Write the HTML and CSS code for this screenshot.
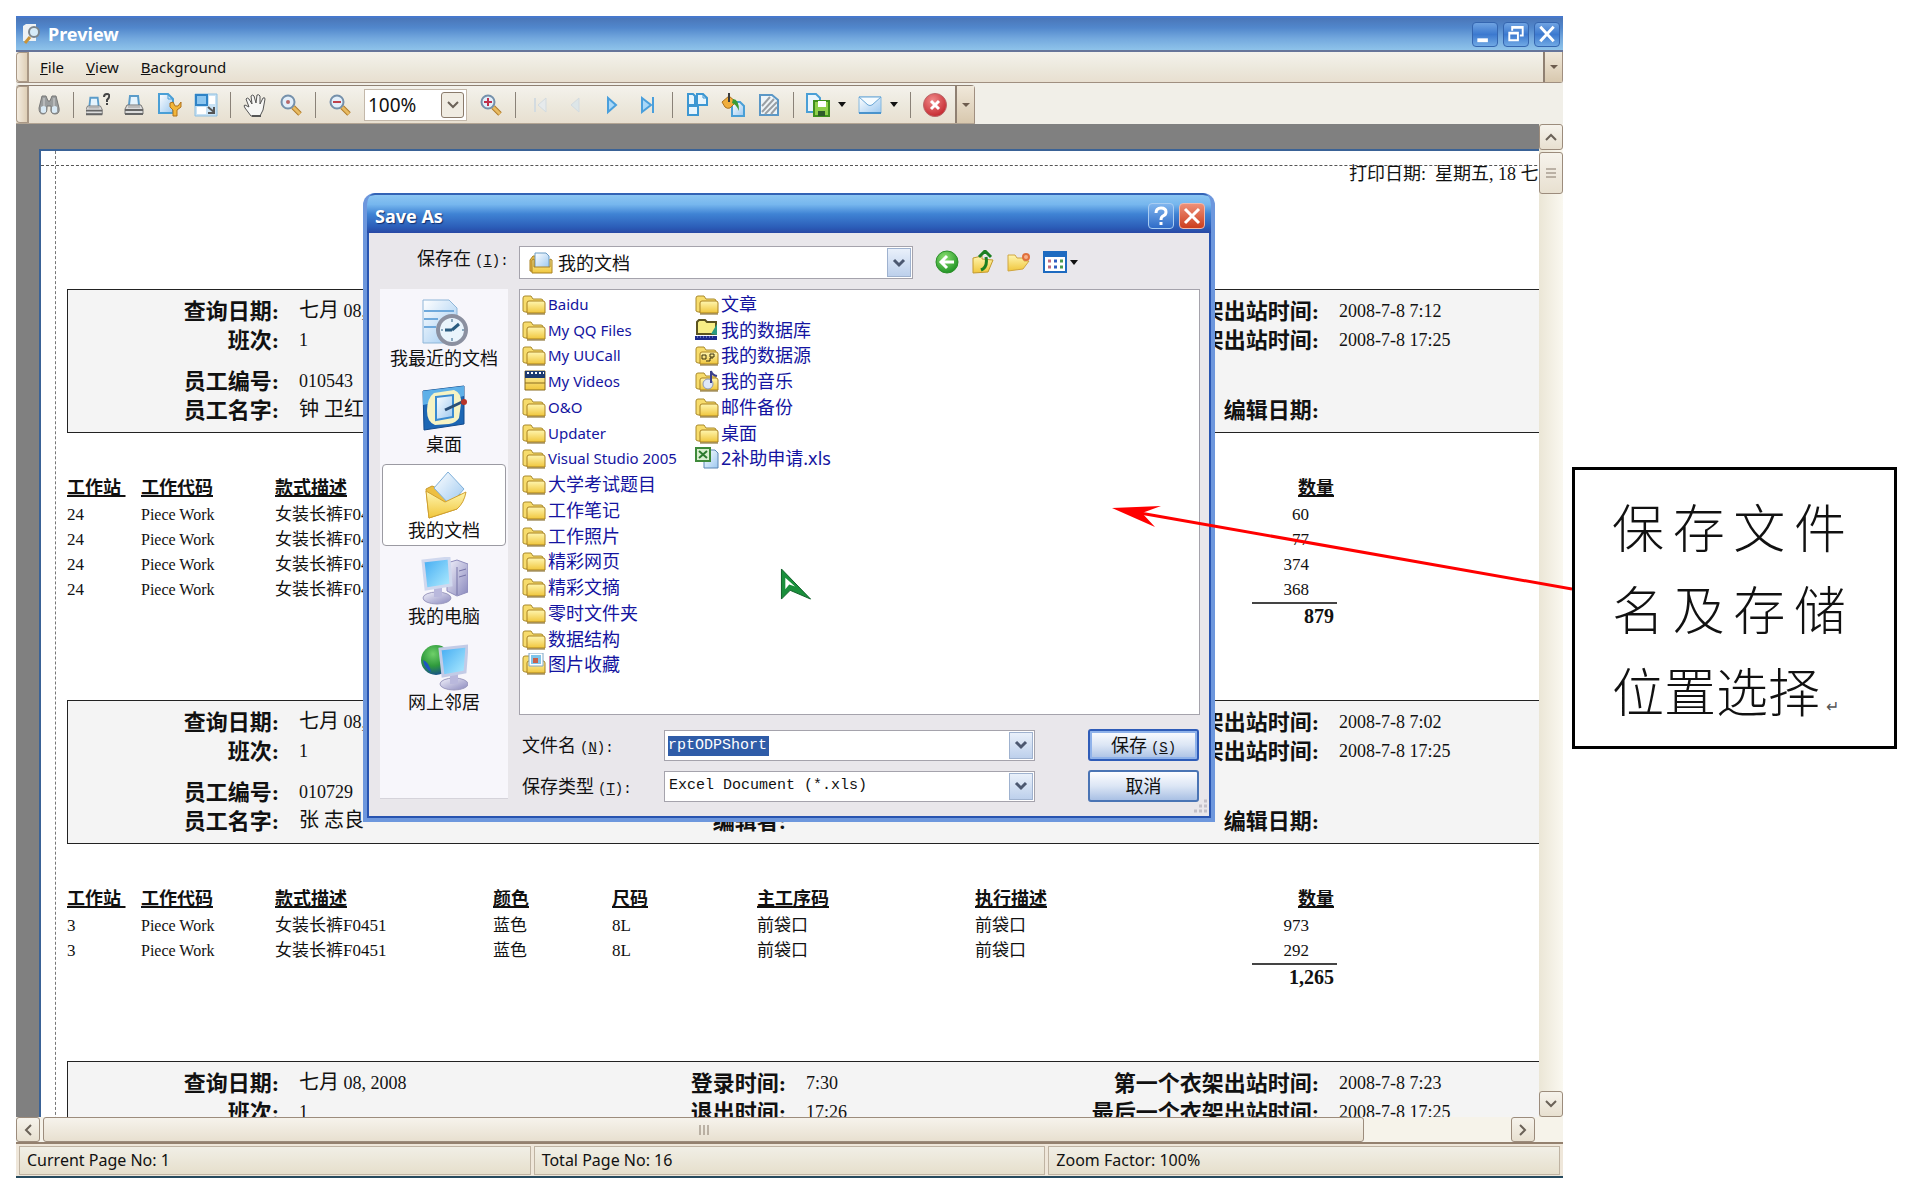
FILE: index.html
```html
<!DOCTYPE html>
<html lang="zh-CN">
<head>
<meta charset="utf-8">
<title>Preview</title>
<link rel="stylesheet" href="styles.css">
</head>
<body>
<svg class="defs" aria-hidden="true">
  <defs>
    <linearGradient id="gFold" x1="0" y1="0" x2="0" y2="1"><stop offset="0" stop-color="#fff6b0"/><stop offset="1" stop-color="#f0c63c"/></linearGradient>
    <linearGradient id="gBlue" x1="0" y1="0" x2="1" y2="1"><stop offset="0" stop-color="#ffffff"/><stop offset="1" stop-color="#9cc8f0"/></linearGradient>
    <linearGradient id="gScreen" x1="0" y1="0" x2="1" y2="1"><stop offset="0" stop-color="#3fa9f2"/><stop offset="1" stop-color="#b5efff"/></linearGradient>
    <linearGradient id="gGray" x1="0" y1="0" x2="1" y2="1"><stop offset="0" stop-color="#f2f2fb"/><stop offset="1" stop-color="#8a88bd"/></linearGradient>
    <radialGradient id="gRed" cx=".4" cy=".3" r=".8"><stop offset="0" stop-color="#f08a8a"/><stop offset="1" stop-color="#c01c24"/></radialGradient>
    <radialGradient id="gGreen" cx=".4" cy=".3" r=".8"><stop offset="0" stop-color="#8be070"/><stop offset="1" stop-color="#138a1c"/></radialGradient>
    <radialGradient id="gGlobe" cx=".4" cy=".3" r=".8"><stop offset="0" stop-color="#6fd06a"/><stop offset=".5" stop-color="#2f9a3c"/><stop offset="1" stop-color="#123f9c"/></radialGradient>
    <symbol id="folder" viewBox="0 0 24 22">
      <path d="M1 18V5q0-2 2-2h6l2 3h8q2 0 2 2v11H3z" fill="#f7dc6c" stroke="#a98a2c"/>
      <path d="M5 20V10q0-2 2-2h14q2 0 2 2v10z" fill="url(#gFold)" stroke="#a98222"/>
      <path d="M5 21h18" stroke="#7c6118"/>
    </symbol>
    <symbol id="chev" viewBox="0 0 14 10"><path d="M2 2l5 5 5-5" fill="none" stroke="currentColor" stroke-width="3"/></symbol>
    <symbol id="lens" viewBox="0 0 24 24">
      <path d="M14 14l7 7" stroke="#b07a28" stroke-width="5"/><path d="M14 14l7 7" stroke="#e8bb62" stroke-width="3"/>
      <circle cx="9" cy="9" r="6.500" fill="#e3effa" stroke="#7590ab" stroke-width="2"/>
    </symbol>
    <symbol id="printer" viewBox="0 0 24 24">
      <path d="M7 12L8 3h8l1 9" fill="#e6f4fd" stroke="#5b9cc9" stroke-width="2"/>
      <path d="M5 12h14l2 4v5H3v-5z" fill="#dcdcdc" stroke="#777"/><path d="M3 17h18M3 21h18" stroke="#666" stroke-width="2"/><path d="M6 14h12" stroke="#999"/>
    </symbol>
  </defs>
</svg>

<main class="app">
  <header class="titlebar">
    <svg class="app-icon" viewBox="0 0 20 22"><path d="M1 3l3-2h10v17H1z" fill="#eef2f4"/><path d="M8 14l-5 6" stroke="#c99438" stroke-width="3"/><circle cx="12" cy="9" r="5" fill="#d6ebf8" stroke="#7b858d" stroke-width="2"/></svg>
    <h1>Preview</h1>
    <div class="win-buttons">
      <button aria-label="Minimize"><svg viewBox="0 0 24 24"><path d="M4 18h11" stroke="#fff" stroke-width="4"/></svg></button>
      <button aria-label="Restore"><svg viewBox="0 0 24 24"><path d="M8 8V4h11v9h-3M8 5h11" fill="none" stroke="#fff" stroke-width="2"/><path d="M5 10h9v8H5zM5 11h9" fill="none" stroke="#fff" stroke-width="2"/></svg></button>
      <button aria-label="Close"><svg viewBox="0 0 24 24"><path d="M5 4l14 15M19 4L5 19" stroke="#fff" stroke-width="3"/></svg></button>
    </div>
  </header>

  <nav class="menubar">
    <span class="grip"></span>
    <button><u>F</u>ile</button><button><u>V</u>iew</button><button><u>B</u>ackground</button>
    <button class="overflow" aria-label="More menus"><i class="tri"></i></button>
  </nav>

  <div class="toolrow">
  <div class="toolbar">
    <span class="grip"></span>
    <div class="tools">
      <button aria-label="Find"><svg viewBox="0 0 24 24"><path d="M5 3h4l2 5h2l2-5h4l3 12q1 6-4 6t-4-6v-2h-4v2q0 6-4 6t-4-6z" fill="#9a9d9e" stroke="#777"/><path d="M4 14q3-2 5 0v5q-3 2-5 0zM15 14q3-2 5 0v5q-3 2-5 0z" fill="#d9eaf6"/><path d="M7 5v8M17 5v8" stroke="#d5d5d5"/></svg></button>
      <i class="sep"></i>
      <button aria-label="Print options"><svg viewBox="0 0 24 24"><use href="#printer" x="-3" y="2" width="22" height="22"/><path d="M18 4q0-3 3-3t2 3q0 1-2 3v2M21 10v2" fill="none" stroke="#444" stroke-width="2"/></svg></button>
      <button aria-label="Print"><svg viewBox="0 0 24 24"><use href="#printer" width="24" height="24"/></svg></button>
      <button aria-label="Page setup"><svg viewBox="0 0 24 24"><path d="M1 1h9l5 5v14H1z" fill="url(#gBlue)" stroke="#4a9fd6" stroke-width="2"/><path d="M10 1v5h5" fill="none" stroke="#4a9fd6"/><path d="M12 10v4l3 3v6h4v-6l4-3v-5l-3 4h-3l-2-4z" fill="#f3b63a" stroke="#b0721c"/></svg></button>
      <button aria-label="Scale"><svg viewBox="0 0 24 24"><path d="M1 1h22v22H1z" fill="#c9e2f4" stroke="#8fbfe0"/><path d="M2 2h11v10H2z" fill="#8cc6f0" stroke="#2f83c6" stroke-width="2"/><path d="M15 3h6v8h-6zM3 14h9v7H3z" fill="#fff"/><path d="M14 14l6 5M20 14v6h-6" fill="none" stroke="#555" stroke-width="2"/></svg></button>
      <i class="sep"></i>
      <button aria-label="Hand tool"><svg viewBox="0 0 24 24"><path d="M8 23l-6-8q-2-3 0-3l4 2-3-8q1-2 3 0l3 5-1-8q2-2 3 0l2 7 1-8q2-1 3 1v8l3-6q2-1 2 1l-2 11-3 6z" fill="#f7f7f5" stroke="#555"/><path d="M9 23h9" stroke="#555" stroke-width="2"/></svg></button>
      <button aria-label="Magnifier"><svg viewBox="0 0 24 24"><use href="#lens" width="24" height="24"/><circle cx="9" cy="9" r="2" fill="#b8686a"/></svg></button>
      <i class="sep"></i>
      <button aria-label="Zoom out"><svg viewBox="0 0 24 24"><use href="#lens" width="24" height="24"/><path d="M5 9h8" stroke="#c0404a" stroke-width="2"/></svg></button>
      <div class="zoom"><select aria-label="Zoom"><option>100%</option></select><span class="drop"><svg viewBox="0 0 14 10"><path d="M2 2l5 5 5-5" fill="none" stroke="#6b6258" stroke-width="2"/></svg></span></div>
      <button aria-label="Zoom in"><svg viewBox="0 0 24 24"><use href="#lens" width="24" height="24"/><path d="M5 9h8M9 5v8" stroke="#c0304a" stroke-width="2"/></svg></button>
      <i class="sep"></i>
      <button aria-label="First page" disabled><svg viewBox="0 0 24 24"><path d="M7 5v14" stroke="#d3dbe0" stroke-width="2"/><path d="M18 5v14l-8-7z" fill="#e6eaec" stroke="#d3dbe0"/></svg></button>
      <button aria-label="Previous page" disabled><svg viewBox="0 0 24 24"><path d="M15 5v14l-8-7z" fill="#dde6e8" stroke="#d3dbe0"/></svg></button>
      <button aria-label="Next page"><svg viewBox="0 0 24 24"><path d="M8 5v14l8-7z" fill="#a9d8f8" stroke="#4a9fdc" stroke-width="2"/></svg></button>
      <button aria-label="Last page"><svg viewBox="0 0 24 24"><path d="M6 5v14l9-7z" fill="#a9d8f8" stroke="#4a9fdc" stroke-width="2"/><path d="M17 4v16" stroke="#4a9fdc" stroke-width="2"/></svg></button>
      <i class="sep"></i>
      <button aria-label="Multiple pages"><svg viewBox="0 0 24 24"><path d="M3 1h5l2 2v9H3zM12 1h6l4 4v7H12zM3 13h10v9H3z" fill="#e8f5fd" stroke="#3d97d2" stroke-width="2"/><path d="M18 1v4h4" fill="none" stroke="#3d97d2"/></svg></button>
      <button aria-label="Page color"><svg viewBox="0 0 24 24"><path d="M11 9h8l4 4v10H11z" fill="url(#gBlue)" stroke="#4a9fd6" stroke-width="2"/><path d="M1 9l7-6 7 6-6 6q-3 1-5-1z" fill="#f0ae3c" stroke="#a9701c"/><path d="M8 0v9" stroke="#3c3c3c" stroke-width="2"/><path d="M12 6q6 0 6 12-3-7-7-8z" fill="#3a9a34"/></svg></button>
      <button aria-label="Watermark"><svg viewBox="0 0 24 24"><path d="M3 2h12l6 5v15H3z" fill="#eef4f8" stroke="#5b97c6" stroke-width="2"/><path d="M5 13l8-9M5 19L17 6M8 21L20 9M14 21l6-7" stroke="#9a9fa4" stroke-width="2"/></svg></button>
      <i class="sep"></i>
      <button class="split" aria-label="Export"><svg viewBox="0 0 24 24"><path d="M1 1h9l4 4v14H1z" fill="#eaf5fc" stroke="#4a9fd6" stroke-width="2"/><path d="M8 8h15v15H8z" fill="#8fd04a" stroke="#3f8f1c" stroke-width="2"/><path d="M12 8h8v6h-8z" fill="#fff"/><path d="M12 18h7v5h-7z" fill="#2f5c2a"/></svg><i class="tri big"></i></button>
      <button class="split" aria-label="Send mail"><svg viewBox="0 0 24 24"><path d="M1 4h22v16H1z" fill="url(#gBlue)" stroke="#86b9de"/><path d="M1 4h22l-9 8q-2 1-4 0z" fill="#f5fbff" stroke="#6aa7d6"/><path d="M1 20h22" stroke="#4a93cc" stroke-width="2"/></svg><i class="tri big"></i></button>
      <i class="sep"></i>
      <button aria-label="Exit"><svg viewBox="0 0 24 24"><circle cx="12" cy="12" r="11.500" fill="url(#gRed)" stroke="#b9686a"/><path d="M8 8l8 8M16 8l-8 8" stroke="#fff" stroke-width="3"/></svg></button>
    </div>
    <button class="overflow" aria-label="Toolbar options"><i class="tri"></i></button>
  </div>
  </div>

  <section class="viewer">
    <div class="canvas">
      <article class="sheet">
        <p class="printed">打印日期: &nbsp;星期五, 18 七</p>

        <section class="info">
          <b>查询日期:</b><span><em>七月</em> 08, 2008</span><b></b><span></span><b>第一个衣架出站时间:</b><span>2008-7-8 7:12</span>
          <b>班次:</b><span>1</span><b></b><span></span><b>最后一个衣架出站时间:</b><span>2008-7-8 17:25</span>
          <b>员工编号:</b><span>010543</span><b></b><span></span><b></b><span></span>
          <b>员工名字:</b><span><em>钟 卫红</em></span><b></b><span></span><b>编辑日期:</b><span></span>
        </section>
        <table class="work">
          <colgroup><col class="c1"><col class="c2"><col class="c3"><col class="c4"><col class="c5"><col class="c6"><col class="c7"><col class="c8"></colgroup>
          <thead><tr><th>工作站&nbsp;</th><th>工作代码</th><th>款式描述</th><th></th><th></th><th></th><th></th><th>数量</th></tr></thead>
          <tbody>
            <tr><td>24</td><td>Piece Work</td><td>女装长裤F0451</td><td></td><td></td><td></td><td></td><td>60</td></tr>
            <tr><td>24</td><td>Piece Work</td><td>女装长裤F0451</td><td></td><td></td><td></td><td></td><td>77</td></tr>
            <tr><td>24</td><td>Piece Work</td><td>女装长裤F0451</td><td></td><td></td><td></td><td></td><td>374</td></tr>
            <tr><td>24</td><td>Piece Work</td><td>女装长裤F0451</td><td></td><td></td><td></td><td></td><td>368</td></tr>
          </tbody>
          <tfoot><tr><td colspan="8"><span>879</span></td></tr></tfoot>
        </table>

        <section class="info">
          <b>查询日期:</b><span><em>七月</em> 08, 2008</span><b></b><span></span><b>第一个衣架出站时间:</b><span>2008-7-8 7:02</span>
          <b>班次:</b><span>1</span><b></b><span></span><b>最后一个衣架出站时间:</b><span>2008-7-8 17:25</span>
          <b>员工编号:</b><span>010729</span><b></b><span></span><b></b><span></span>
          <b>员工名字:</b><span><em>张 志良</em></span><b>编辑者:</b><span></span><b>编辑日期:</b><span></span>
        </section>
        <table class="work">
          <colgroup><col class="c1"><col class="c2"><col class="c3"><col class="c4"><col class="c5"><col class="c6"><col class="c7"><col class="c8"></colgroup>
          <thead><tr><th>工作站&nbsp;</th><th>工作代码</th><th>款式描述</th><th>颜色</th><th>尺码</th><th>主工序码</th><th>执行描述</th><th>数量</th></tr></thead>
          <tbody>
            <tr><td>3</td><td>Piece Work</td><td>女装长裤F0451</td><td>蓝色</td><td>8L</td><td>前袋口</td><td>前袋口</td><td>973</td></tr>
            <tr><td>3</td><td>Piece Work</td><td>女装长裤F0451</td><td>蓝色</td><td>8L</td><td>前袋口</td><td>前袋口</td><td>292</td></tr>
          </tbody>
          <tfoot><tr><td colspan="8"><span>1,265</span></td></tr></tfoot>
        </table>

        <section class="info">
          <b>查询日期:</b><span><em>七月</em> 08, 2008</span><b>登录时间:</b><span>7:30</span><b>第一个衣架出站时间:</b><span>2008-7-8 7:23</span>
          <b>班次:</b><span>1</span><b>退出时间:</b><span>17:26</span><b>最后一个衣架出站时间:</b><span>2008-7-8 17:25</span>
        </section>
      </article>
    </div>
    <div class="vscroll">
      <button aria-label="Scroll up"><svg viewBox="0 0 14 10"><path d="M2 8l5-5 5 5" fill="none" stroke="#6b6258" stroke-width="2"/></svg></button>
      <span class="vthumb"><svg viewBox="0 0 12 12"><path d="M1 2h10M1 6h10M1 10h10" stroke="#85786a"/></svg></span>
      <button class="end" aria-label="Scroll down"><svg viewBox="0 0 14 10"><path d="M2 2l5 5 5-5" fill="none" stroke="#6b6258" stroke-width="2"/></svg></button>
    </div>
  </section>
  <div class="hscroll">
    <button aria-label="Scroll left"><svg viewBox="0 0 10 14"><path d="M8 2L3 7l5 5" fill="none" stroke="#6b6258" stroke-width="2"/></svg></button>
    <span class="hthumb"><svg viewBox="0 0 12 12"><path d="M2 1v10M6 1v10M10 1v10" stroke="#85786a"/></svg></span>
    <button class="end" aria-label="Scroll right"><svg viewBox="0 0 10 14"><path d="M2 2l5 5-5 5" fill="none" stroke="#6b6258" stroke-width="2"/></svg></button>
  </div>
  <footer class="status"><span>Current Page No: 1</span><span>Total Page No: 16</span><span>Zoom Factor: 100%</span></footer>

  <section class="dialog" role="dialog" aria-label="Save As">
    <header class="dlg-title">
      <h2>Save As</h2>
      <button class="help" aria-label="Help"><svg viewBox="0 0 24 24"><path d="M7 9q0-5 5-5t5 4q0 3-3 4-2 1-2 4M12 18v3" fill="none" stroke="#fff" stroke-width="3"/></svg></button>
      <button class="close" aria-label="Close dialog"><svg viewBox="0 0 24 24"><path d="M5 5l14 14M19 5L5 19" stroke="#fff" stroke-width="3"/></svg></button>
    </header>
    <div class="dlg-body">
      <div class="lookin">
        <label for="folder-in">保存在<span class="key">(<u>I</u>):</span></label>
        <div class="combo tall">
          <svg class="ic" viewBox="0 0 24 22"><path d="M1 19V8l3-4h4v16z" fill="#e8b848" stroke="#a98222"/><path d="M6 16V1h11l3 3v12z" fill="url(#gBlue)" stroke="#6b9cc4"/><path d="M3 21V8l2-1v8h16V7l2 1v13z" fill="url(#gFold)" stroke="#a98222"/></svg>
          <select id="folder-in"><option>我的文档</option></select>
          <span class="dd"><svg><use href="#chev"/></svg></span>
        </div>
        <div class="navs">
          <button aria-label="Back"><svg viewBox="0 0 24 24"><circle cx="12" cy="12" r="11" fill="url(#gGreen)" stroke="#2d8f2a"/><path d="M12 6l-6 6 6 6M7 12h12" fill="none" stroke="#fff" stroke-width="3"/></svg></button>
          <button aria-label="Up one level"><svg viewBox="0 0 24 24"><path d="M2 23V8l9-2v3l11 1-5 12z" fill="url(#gFold)" stroke="#c39a2e"/><path d="M10 20q7-3 5-13M8 7l6-6 6 6" fill="none" stroke="#1c7f22" stroke-width="3"/></svg></button>
          <button aria-label="New folder"><svg viewBox="0 0 24 24"><path d="M1 21V5h7l2 3h7v3h5l-6 8z" fill="url(#gFold)" stroke="#d0a640"/><circle cx="19" cy="7" r="3" fill="#f7b08a" stroke="#e0703c" stroke-width="2"/></svg></button>
          <button class="split" aria-label="View"><svg viewBox="0 0 24 24"><path d="M1 2h22v20H1z" fill="#fff" stroke="#1d6ac0" stroke-width="2"/><path d="M1 4h22" stroke="#1d6ac0" stroke-width="6"/><path d="M5 11h3M5 17h3" stroke="#c06a80" stroke-width="3"/><path d="M11 11h3M11 17h3" stroke="#2f5cc0" stroke-width="3"/><path d="M17 11h3M17 17h3" stroke="#4a9a50" stroke-width="3"/></svg><i class="tri big"></i></button>
        </div>
      </div>

      <nav class="places">
        <button><svg viewBox="0 0 48 48"><path d="M3 1h26l8 8v35H3z" fill="url(#gBlue)" stroke="#8fb6d8"/><path d="M4 12h30M4 20h14M4 28h12" stroke="#6fa9dc" stroke-width="2"/><circle cx="32" cy="31" r="14" fill="#e9f4fc" stroke="#8b90a0" stroke-width="4"/><path d="M32 31l7-6M32 31h-7" stroke="#2a5c80" stroke-width="3"/><path d="M32 20v3M32 39v3M21 31h2M42 31h2" stroke="#2a5c80"/></svg>我最近的文档</button>
        <button><svg viewBox="0 0 48 48"><path d="M3 6l41-5v38L4 45z" fill="#1c66b4" stroke="#134a8c"/><path d="M3 6l41-5v10L3 20z" fill="#5fb0e8"/><path d="M14 8l20-3q8 3 7 14l-2 14q-3 5-10 6l-14 1q-8-3-8-14 0-13 7-18z" fill="#f6f3c4"/><path d="M16 12l17-2v22l-17 3z" fill="url(#gBlue)" stroke="#3a8ad0" stroke-width="2"/><path d="M25 25l17-8" stroke="#2a4f78" stroke-width="3"/><circle cx="44" cy="17" r="3" fill="#b83428"/></svg>桌面</button>
        <button class="on"><svg viewBox="0 0 48 48"><path d="M6 18l6-3 5 2 24 7-4 14-28 9z" fill="#edbf42" stroke="#c79a2e"/><path d="M14 17L28 1l16 17-14 16z" fill="url(#gBlue)" stroke="#7fb0da"/><path d="M6 20l19 11 21-10q-2 11-9 17L9 47z" fill="url(#gFold)" stroke="#d0a030"/></svg>我的文档</button>
        <button><svg viewBox="0 0 48 48"><path d="M27 6l10-3 11 4v28l-11 4-10-5z" fill="url(#gGray)" stroke="#8f8dbc"/><path d="M37 10v28M39 14l7-2M39 20l7-2" stroke="#7775a8"/><ellipse cx="17" cy="41" rx="14" ry="6" fill="url(#gGray)" stroke="#9c9abf"/><path d="M14 28h8v12h-8z" fill="#b9b8dc"/><path d="M3 4l26-3 2 27-25 4z" fill="url(#gScreen)" stroke="#d0d8ee" stroke-width="3"/></svg>我的电脑</button>
        <button><svg viewBox="0 0 48 48"><circle cx="16" cy="17" r="15" fill="url(#gGlobe)"/><path d="M3 17q6 2 8 12Q4 25 3 17z" fill="#1d55c0"/><ellipse cx="34" cy="41" rx="14" ry="6" fill="url(#gGray)" stroke="#9c9abf"/><path d="M30 30h8v11h-8z" fill="#b9b8dc"/><path d="M20 6l27-3-2 26-22 4z" fill="url(#gScreen)" stroke="#c3cbe6" stroke-width="3"/></svg>网上邻居</button>
      </nav>

      <div class="files">
        <ul>
          <li><a class="en" href="#"><svg><use href="#folder"/></svg>Baidu</a></li>
          <li><a class="en" href="#"><svg><use href="#folder"/></svg>My QQ Files</a></li>
          <li><a class="en" href="#"><svg><use href="#folder"/></svg>My UUCall</a></li>
          <li><a class="en" href="#"><svg viewBox="0 0 24 22"><path d="M3 1h20v19H3z" fill="url(#gFold)" stroke="#8a6c20"/><path d="M3 1h20v7H3z" fill="#1d3a70"/><path d="M5 3h17" stroke="#fff" stroke-width="2" stroke-dasharray="2 2"/><path d="M3 13h20" stroke="#8a6c20"/></svg>My Videos</a></li>
          <li><a class="en" href="#"><svg><use href="#folder"/></svg>O&amp;O</a></li>
          <li><a class="en" href="#"><svg><use href="#folder"/></svg>Updater</a></li>
          <li><a class="en" href="#"><svg><use href="#folder"/></svg>Visual Studio 2005</a></li>
          <li><a href="#"><svg><use href="#folder"/></svg>大学考试题目</a></li>
          <li><a href="#"><svg><use href="#folder"/></svg>工作笔记</a></li>
          <li><a href="#"><svg><use href="#folder"/></svg>工作照片</a></li>
          <li><a href="#"><svg><use href="#folder"/></svg>精彩网页</a></li>
          <li><a href="#"><svg><use href="#folder"/></svg>精彩文摘</a></li>
          <li><a href="#"><svg><use href="#folder"/></svg>零时文件夹</a></li>
          <li><a href="#"><svg><use href="#folder"/></svg>数据结构</a></li>
          <li><a href="#"><svg viewBox="0 0 24 22"><use href="#folder" width="24" height="22"/><path d="M7 0h14v13H7z" fill="#fff" stroke="#7fa6c6"/><path d="M9 2h10v9H9z" fill="#7fc4ea"/><path d="M11 5h5v5h-5z" fill="#c8604a"/></svg>图片收藏</a></li>
          <li><a href="#"><svg><use href="#folder"/></svg>文章</a></li>
          <li><a href="#"><svg viewBox="0 0 24 22"><path d="M2 15V3l2-2h6l2 2h9v12z" fill="#f7ee86" stroke="#5b5420" stroke-width="2"/><path d="M16 15l6-10v11z" fill="#2a9a80"/><path d="M0 19h22" stroke="#1c2a8c" stroke-width="4"/><path d="M2 18h18" stroke="#9fb4f0" stroke-dasharray="1 2"/></svg>我的数据库</a></li>
          <li><a href="#"><svg viewBox="0 0 24 22"><use href="#folder" width="24" height="22"/><path d="M7 11h4v4H7zM15 10h4v3h-4zM11 17h4v-3h3" fill="none" stroke="#3a3210"/></svg>我的数据源</a></li>
          <li><a href="#"><svg viewBox="0 0 24 22"><use href="#folder" width="24" height="22"/><circle cx="13" cy="14" r="5" fill="#dfe8f8" stroke="#8c98b8"/><path d="M16 13V1q1 4 6 5" fill="none" stroke="#3a3f8c" stroke-width="2"/></svg>我的音乐</a></li>
          <li><a href="#"><svg><use href="#folder"/></svg>邮件备份</a></li>
          <li><a href="#"><svg><use href="#folder"/></svg>桌面</a></li>
          <li><a href="#"><svg viewBox="0 0 24 22"><path d="M9 3h11l3 3v15H9z" fill="url(#gBlue)" stroke="#5a86b4"/><path d="M1 1h14v13H1z" fill="#d9efcf" stroke="#3f8a3a" stroke-width="2"/><path d="M4 4l8 7M12 4l-8 7" stroke="#2d7a2d" stroke-width="2"/></svg>2补助申请.xls</a></li>
        </ul>
        <svg class="cursor" viewBox="0 0 32 34"><path d="M1 1v31l9-9 21 9z" fill="#1a8f3c" stroke="#0d5e26"/><path d="M5 10v12l4-5 6 2z" fill="#fff"/></svg>
      </div>

      <div class="fields">
        <label for="fname">文件名<span class="key">(<u>N</u>):</span></label>
        <div class="combo"><input id="fname" value="rptODPShort"><span class="dd"><svg><use href="#chev"/></svg></span></div>
        <button class="primary">保存<span class="key">(<u>S</u>)</span></button>
        <label for="ftype">保存类型<span class="key">(<u>T</u>):</span></label>
        <div class="combo"><select id="ftype" class="mono"><option>Excel Document (*.xls)</option></select><span class="dd"><svg><use href="#chev"/></svg></span></div>
        <button>取消</button>
      </div>
      <svg class="sizer" viewBox="0 0 16 16"><path d="M12 2h3M7 7h3M12 7h3M2 12h3M7 12h3M12 12h3" stroke="#c3c0c8" stroke-width="3"/></svg>
    </div>
  </section>
</main>

<aside class="callout">
  <svg class="pointer" viewBox="0 0 462 90"><path d="M30 8l432 76" stroke="#f00" stroke-width="3"/><path d="M2 3l49-2-19 7 13 14z" fill="#f00"/></svg>
  <p>保存文件名及存储位置选择<small>↵</small></p>
</aside>
</body>
</html>
```
FILE: styles.css
```css
* { box-sizing: border-box; }
body {
  margin: 0;
  padding: 16px 23px 24px 16px;
  display: flex;
  align-items: flex-start;
  gap: 9px;
  min-height: 100vh;
  background: #fff;
  color: #111;
  font: 15px/20px "Noto Sans", "Noto Sans CJK SC", sans-serif;
}
h1, h2, p, ul { margin: 0; padding: 0; }
button { margin: 0; padding: 0; border: 0; background: none; color: inherit; font: inherit; }
select, input { margin: 0; padding: 0; border: 0; background: none; color: inherit; font: inherit; appearance: none; outline: 0; }
svg { display: block; }
.defs { position: absolute; width: 0; height: 0; }

/* main window */
.app {
  position: relative;
  flex: 1;
  min-width: 0;
  height: calc(100vh - 40px);
  display: flex;
  flex-direction: column;
  background: #f1efe8;
  border-bottom: 2px solid #264a5e;
}
.titlebar {
  height: 36px;
  flex: none;
  display: flex;
  align-items: center;
  gap: 6px;
  padding: 0 3px 0 6px;
  background: linear-gradient(#4a76b8, #5187cc 30%, #74a9de 65%, #8ec3ea);
  border-top: 2px solid #4678cc;
  border-bottom: 2px solid #66759a;
  color: #fff;
}
.app-icon { width: 20px; height: 22px; }
.titlebar h1 { flex: 1; font-size: 18px; line-height: 24px; font-weight: 700; }
.win-buttons { display: flex; gap: 5px; }
.win-buttons button {
  width: 26px; height: 25px;
  border: 1px solid #3566b0; border-radius: 4px;
  background: linear-gradient(#6fa3e2, #3c79cf 50%, #70a9e4);
}
.win-buttons svg { width: 24px; height: 23px; }

.menubar, .toolbar {
  display: flex;
  align-items: stretch;
  background: linear-gradient(#f4f2ec, #ece8dc 55%, #e8dfd0);
  border: solid #a08f80;
  border-width: 0 1px 1px 0;
}
.menubar { height: 31px; flex: none; border-radius: 0 0 3px 3px; }
.menubar > button { margin-left: 22px; }
.menubar .grip + button { margin-left: 11px; }
.grip {
  width: 13px;
  border: 1px solid #a99886;
  border-right-width: 2px;
  border-radius: 4px 0 0 4px;
  background: linear-gradient(90deg, #f3ece0, #dfcfb6);
}
.menubar .overflow, .toolbar .overflow {
  width: 19px;
  margin-left: auto;
  display: grid;
  place-items: center;
  border-left: 2px solid #8f8072;
  background: linear-gradient(#f0e8da, #d8c8ae);
}
.tri { border: 4px solid transparent; border-top-color: #6d5c4e; border-bottom: 0; }
.tri.big { border-top: 5px solid #111; }
.toolrow { flex: none; padding-top: 2px; display: flex; }
.toolbar { height: 39px; border-top: 1px solid #8f8072; border-bottom-color: #b3a594; border-radius: 4px 4px 0 0; }
.tools { display: flex; align-items: center; gap: 12px; padding: 0 8px; }
.tools > button { width: 24px; height: 24px; }
.tools > button > svg { width: 24px; height: 24px; }
.tools > .split { width: 40px; }
.split { display: flex; align-items: center; gap: 8px; }
.sep { width: 1px; height: 26px; background: #8a8278; }
.zoom {
  width: 103px; height: 32px;
  display: flex;
  padding: 2px;
  background: #fff;
  border: 1px solid #c3b8aa;
}
.zoom select { flex: 1; min-width: 0; padding-left: 1px; font-size: 19px; line-height: 26px; }
.drop { width: 23px; border: 1px solid #8a7b6c; border-radius: 3px; background: #f0ece2; display: grid; place-items: center; }
.drop svg, .vscroll button svg { width: 14px; height: 10px; }

/* report viewer */
.viewer { flex: 1; min-height: 0; display: flex; }
.canvas { flex: 1; min-width: 0; overflow: hidden; padding: 25px 0 0 23px; background: #808080; }
.sheet {
  position: relative;
  width: 1620px;
  padding: 12px 26px 0;
  border: 2px solid #3a6296;
  background: #fff;
  font: 18px/22px "Liberation Serif", "Noto Sans CJK SC", serif;
}
.sheet::before, .sheet::after { content: ""; position: absolute; inset: 14px 0 auto 0; border-top: 1px dashed #555; }
.sheet::after { inset: 0 auto 0 14px; border-top: 0; border-left: 1px dashed #777; }
.printed { padding-left: 1282px; margin-bottom: 104px; white-space: nowrap; }
.info {
  display: grid;
  grid-template-columns: 214px 207px 300px 177px 356px 1fr;
  grid-template-rows: 29px 29px 41px 29px;
  align-items: end;
  padding: 7px 0;
  border: 1px solid #222;
  background: #f4f4f4;
  line-height: 29px;
}
.info b { padding-right: 3px; text-align: right; font-size: 22px; white-space: nowrap; }
.info span { padding-left: 17px; white-space: nowrap; }
.info em { font-style: normal; font-size: 20px; }
.work { width: 1270px; margin: 41px 0 71px; table-layout: fixed; border-collapse: collapse; font-size: 17px; }
.work th, .work td { padding: 0; text-align: left; white-space: nowrap; }
.work th { height: 28px; line-height: 28px; font-size: 18px; text-decoration: underline; text-decoration-thickness: 2px; }
.work tbody td { height: 25px; line-height: 25px; }
.work tbody td:nth-child(2) { font-size: 16px; }
.work th:last-child, .work td:last-child { text-align: right; padding-right: 3px; }
.work tbody td:last-child { padding-right: 28px; }
.work tfoot td:last-child { padding-right: 0; height: 27px; }
.work tfoot span { display: block; width: 85px; margin-left: auto; padding-right: 3px; border-top: 2px solid #444; font-weight: 700; font-size: 20px; line-height: 25px; }
.c1 { width: 74px; } .c2 { width: 134px; } .c3 { width: 218px; } .c4 { width: 119px; }
.c5 { width: 145px; } .c6 { width: 218px; } .c7 { width: 120px; }

.vscroll { width: 24px; display: flex; flex-direction: column; gap: 2px; background: linear-gradient(90deg, #ebe6d6, #faf8f0); }
.vscroll button, .vthumb, .hscroll button, .hthumb {
  display: grid;
  place-items: center;
  border: 1px solid #9c8c7c;
  border-radius: 3px;
  background: linear-gradient(#f6f3ec, #e8e0d0);
}
.vscroll button { height: 26px; }
.vthumb { height: 42px; }
.vthumb svg, .hthumb svg { width: 12px; height: 12px; }
.hscroll { height: 25px; flex: none; display: flex; gap: 3px; padding-right: 28px; background: #f6f3ea; }
.hscroll button { width: 24px; flex: none; }
.hscroll button svg { width: 10px; height: 14px; }
.hthumb { flex: 0 1 1321px; }
.vscroll .end { margin-top: auto; }
.hscroll .end { margin-left: 144px; }
.status {
  flex: none;
  display: grid;
  grid-template-columns: repeat(3, 1fr);
  gap: 3px;
  padding: 2px 3px 1px;
  border-top: 2px solid #94816f;
  background: #efe7da;
  font-size: 16px;
}
.status span { padding: 2px 7px; line-height: 23px; border: 1px solid #bfb3a2; background: linear-gradient(#f1efe6, #e6dfcc); }

/* save dialog */
.dialog {
  position: absolute;
  left: 347px;
  top: 177px;
  width: 852px;
  border: solid #6d97dd;
  border-width: 0 4px 4px;
  border-radius: 12px 12px 0 0;
  background: #6d97dd;
  overflow: hidden;
}
.dlg-title {
  height: 40px;
  margin: 0 -4px;
  padding: 4px 10px 0 12px;
  display: flex;
  align-items: center;
  gap: 5px;
  border-top: 2px solid #3363b5;
  border-radius: 12px 12px 0 0;
  background: linear-gradient(#8cc6f2, #76b6ee 25%, #3f83d4 50%, #2b5db8 85%, #2848a4);
  color: #fff;
}
.dlg-title h2 { flex: 1; font-size: 18px; line-height: 24px; text-shadow: 1px 1px 1px #123070; }
.dlg-title button { width: 26px; height: 26px; border: 1px solid #a9cdf2; border-radius: 4px; background: linear-gradient(#7fb5ee, #2f6cc8); }
.dlg-title .close { border-color: #f0b8ac; background: linear-gradient(#ee9078, #cc3e1e); }
.dlg-title svg { width: 24px; height: 24px; }
.dlg-body {
  position: relative;
  display: grid;
  grid-template-columns: 128px 1fr;
  grid-template-rows: 56px 426px 1fr;
  column-gap: 11px;
  padding: 0 9px 14px 11px;
  border: solid #2854b0;
  border-width: 0 2px 2px;
  background: #e9e7eb;
  font-size: 18px;
  line-height: 24px;
}
.key { margin-left: 4px; font: 14px "Liberation Mono", monospace; }
.lookin { grid-column: 1 / 3; display: flex; align-items: flex-start; padding-top: 13px; }
.lookin label { width: 139px; padding-left: 37px; white-space: nowrap; }
.combo { display: flex; align-items: stretch; height: 31px; padding: 1px; border: 1px solid #a5a3ac; background: #fff; }
.combo.tall { width: 394px; height: 33px; }
.combo select { flex: 1; min-width: 0; padding-left: 5px; }
.combo .ic { width: 24px; height: 22px; margin: 4px 0 0 8px; }
.dd { width: 24px; margin-left: auto; flex: none; display: grid; place-items: center; border: 1px solid #9fb2cf; background: linear-gradient(#e9f0fa, #bdd0ec); color: #4c5870; }
.dd svg { width: 14px; height: 10px; }
.navs { display: flex; gap: 12px; padding: 4px 0 0 22px; }
.navs svg { width: 24px; height: 24px; }
.navs .split { gap: 3px; }
.places { grid-row: 2 / 4; height: 510px; padding: 3px 2px; display: flex; flex-direction: column; gap: 4px; background: #f7f6fb; border-bottom: 1px solid #d5d3da; }
.places button { height: 82px; padding-top: 6px; display: flex; flex-direction: column; align-items: center; border: 1px solid transparent; border-radius: 4px; line-height: 22px; white-space: nowrap; }
.places svg { width: 48px; height: 48px; }
.places .on { background: #fff; border-color: #9b9aa2; }
.files { position: relative; border: 1px solid #a5a3ac; background: #fff; padding: 2px; }
.files ul { list-style: none; display: grid; grid-auto-flow: column; grid-template-rows: repeat(15, 1fr); grid-template-columns: 173px 173px; height: 386px; }
.files li { min-height: 0; }
.files a { display: flex; align-items: center; gap: 2px; color: #1414a0; text-decoration: none; line-height: 24px; white-space: nowrap; }
.files .en { font-size: 15px; }
.files a svg { width: 24px; height: 22px; flex: none; }
.files .cursor { position: absolute; left: 260px; top: 278px; width: 32px; height: 33px; }
.fields { display: grid; grid-template-columns: 142px 371px 1fr; row-gap: 9px; padding: 14px 1px 0 3px; align-content: start; align-items: center; }
.fields button { width: 111px; height: 32px; justify-self: end; border: 2px solid #4a74b4; border-radius: 3px; background: linear-gradient(#fdfdff, #dce6f5 50%, #a9c0e4); line-height: 26px; }
.fields .primary { border-color: #2f5cb8; box-shadow: inset 0 0 0 2px #8fb2ea; }
.fields .combo input { width: 101px; margin: 4px 0 3px 2px; background: #2f5ca8; color: #fff; font: 15px/20px "Liberation Mono", monospace; }
.fields .mono { padding-left: 3px; font: 15px/20px "Liberation Mono", monospace; }
.sizer { position: absolute; right: 1px; bottom: 1px; width: 16px; height: 16px; }

/* annotation */
.callout { position: relative; width: 325px; flex: none; margin-top: 451px; padding: 15px 48px 15px 37px; border: 3px solid #000; }
.callout p { font: 300 52px/82px "Noto Sans CJK SC", sans-serif; text-align: justify; }
.callout small { font-size: 16px; line-height: 16px; color: #555; margin-left: 6px; }
.pointer { position: absolute; right: calc(100% + 3px); top: 35px; width: 462px; height: 90px; }
```
